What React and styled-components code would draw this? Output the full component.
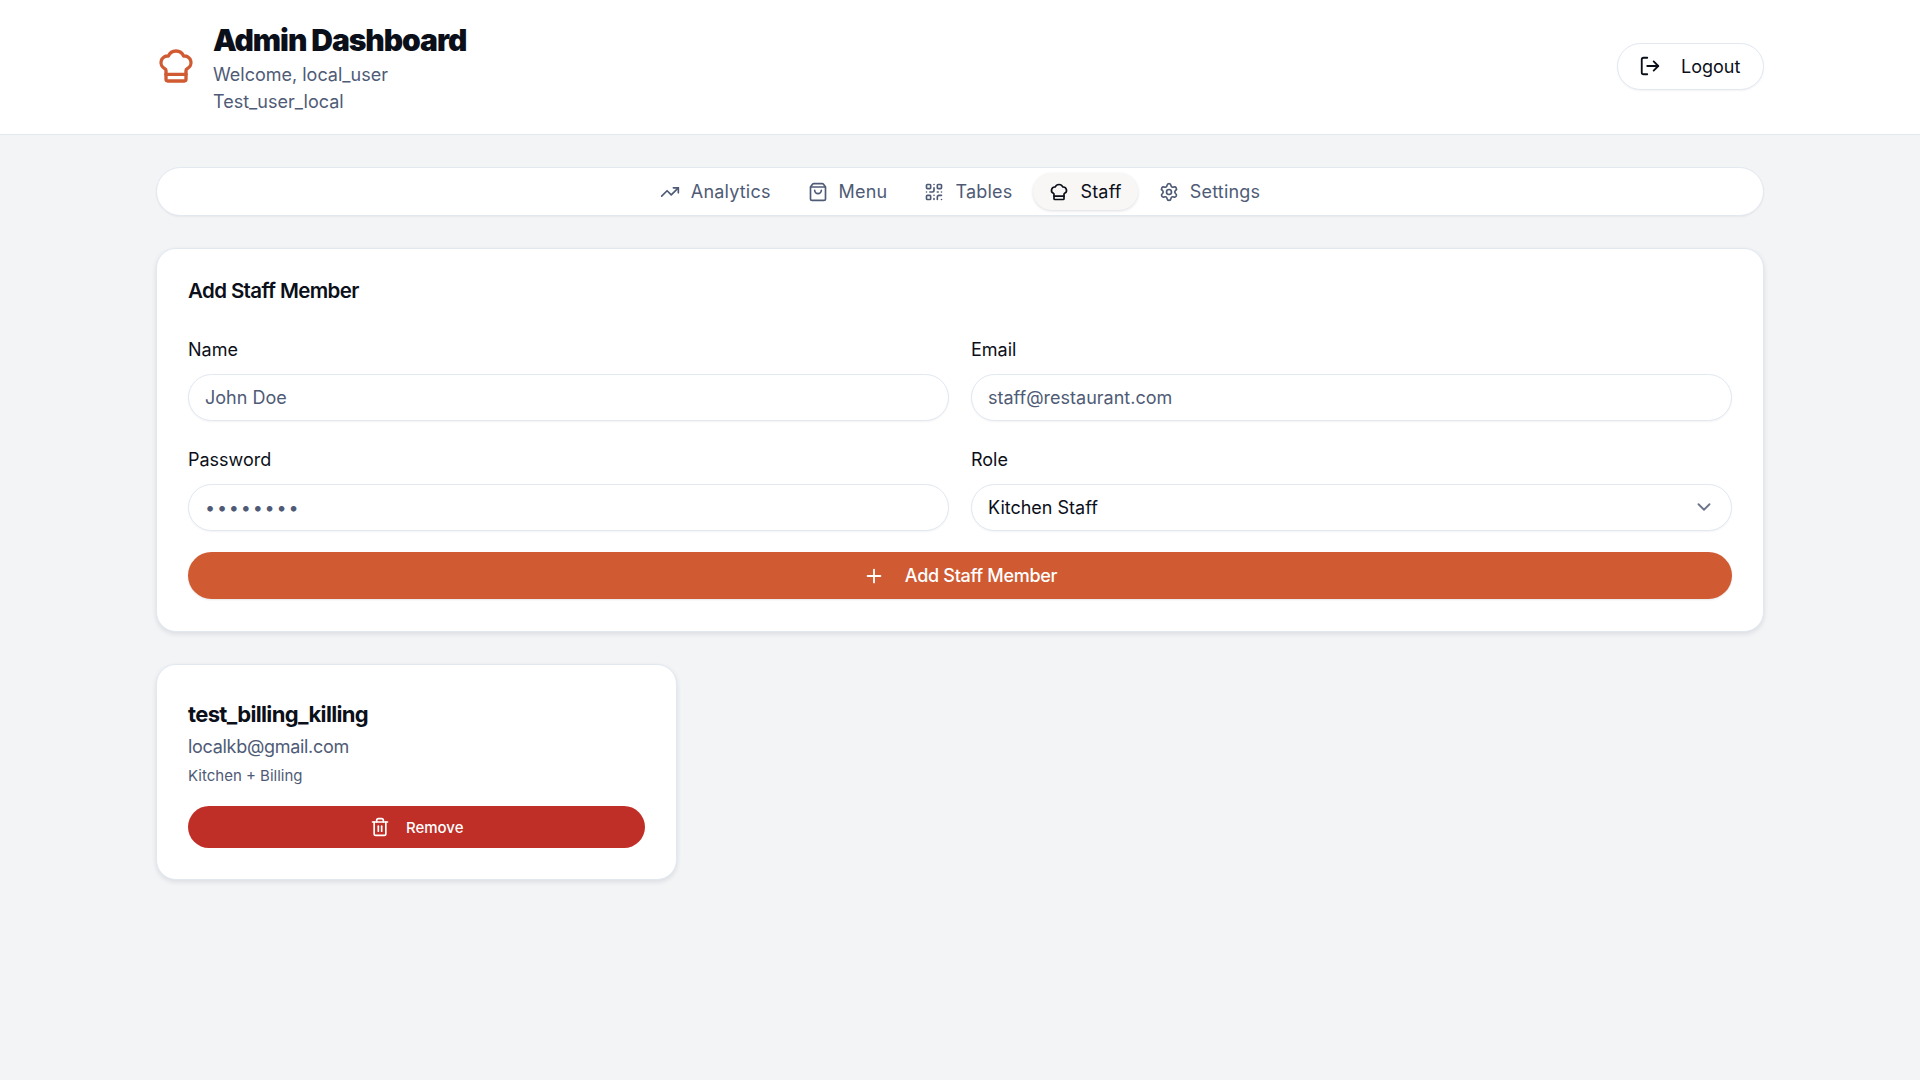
import React from "react";
import styled, { createGlobalStyle } from "styled-components";
import {
  ChefHat,
  ChevronDown,
  LogOut,
  Plus,
  QrCode,
  Settings,
  ShoppingBag,
  Trash2,
  TrendingUp,
} from "lucide-react";

const GlobalStyle = createGlobalStyle`
  * {
    box-sizing: border-box;
  }

  body {
    margin: 0;
    min-height: 1080px;
    background: #f3f4f6;
    color: #0b0f19;
    font-family: Inter, "Liberation Sans", sans-serif;
    font-size: 18px;
  }
`;

const Header = styled.header`
  display: flex;
  align-items: center;
  justify-content: space-between;
  height: 135px;
  padding: 0 156px;
  background: #ffffff;
  border-bottom: 1px solid #e2e8f0;
`;

const Brand = styled.div`
  display: flex;
  align-items: center;
  gap: 17px;
  padding-top: 3px;
  color: #d05a32;

  svg {
    margin-bottom: 5px;
  }
`;

const Title = styled.h1`
  margin: 0 0 3px;
  color: #0b0f19;
  font-size: 30px;
  font-weight: 900;
  line-height: 36px;
  letter-spacing: -0.035em;
`;

const Subtitle = styled.p`
  margin: 0;
  color: #4f5b76;
  font-size: 18px;
  line-height: 27px;
`;

const LogoutButton = styled.button`
  display: flex;
  align-items: center;
  gap: 20px;
  width: 147px;
  height: 47px;
  margin-bottom: 2px;
  padding: 0 21px;
  background: #ffffff;
  border: 1px solid #e2e8f0;
  border-radius: 999px;
  box-shadow: 0 1px 2px rgba(15, 23, 42, 0.05);
  color: #0b0f19;
  font: inherit;
`;

const Main = styled.main`
  display: flex;
  flex-direction: column;
  gap: 32px;
  padding: 32px 156px;
`;

const Tabs = styled.nav`
  display: flex;
  align-items: center;
  justify-content: center;
  gap: 5px;
  height: 49px;
  background: #ffffff;
  border: 1px solid #e2e8f0;
  border-radius: 999px;
  box-shadow: 0 1px 2px rgba(15, 23, 42, 0.05);
`;

const Tab = styled.button`
  display: flex;
  align-items: center;
  gap: 11px;
  height: 37px;
  padding: 0 16px;
  background: ${(props) => (props.$active ? "#f8f7f5" : "transparent")};
  border: 0;
  border-radius: 999px;
  box-shadow: ${(props) =>
    props.$active ? "0 1px 3px rgba(15, 23, 42, 0.14)" : "none"};
  color: ${(props) => (props.$active ? "#0b0f19" : "#4f5b76")};
  font: inherit;
  letter-spacing: 0.2px;
`;

const Card = styled.section`
  padding: 31px;
  background: #ffffff;
  border: 1px solid #e2e8f0;
  border-radius: 20px;
  box-shadow: 0 2px 5px rgba(15, 23, 42, 0.1);
`;

const CardTitle = styled.h2`
  margin: 0 0 32px;
  font-size: 20.5px;
  font-weight: 600;
  line-height: 22px;
  letter-spacing: -0.03em;
`;

const FormGrid = styled.div`
  display: grid;
  grid-template-columns: 1fr 1fr;
  gap: 23px 22px;
`;

const Field = styled.label`
  display: flex;
  flex-direction: column;
  gap: 8px;
  font-size: 18px;
  line-height: 32px;
`;

const Input = styled.input`
  width: 100%;
  height: 47px;
  padding: 0 16px;
  background: #ffffff;
  border: 1px solid #e2e8f0;
  border-radius: 999px;
  box-shadow: 0 1px 2px rgba(15, 23, 42, 0.05);
  color: #4f5b76;
  font: inherit;
  outline: none;

  &::placeholder {
    color: #4f5b76;
    opacity: 1;
  }
`;

const PasswordInput = styled(Input).attrs({ type: "password" })`
  letter-spacing: 1.8px;
`;

const SelectWrap = styled.div`
  position: relative;
  color: #6b7489;

  svg {
    position: absolute;
    top: 12px;
    right: 17px;
    pointer-events: none;
  }
`;

const Select = styled(Input).attrs({ as: "select" })`
  appearance: none;
  color: #0b0f19;
`;

const SubmitButton = styled.button`
  display: flex;
  align-items: center;
  justify-content: center;
  gap: 20px;
  width: 100%;
  height: 47px;
  margin: 21px 0 1px;
  background: #d05a32;
  border: 0;
  border-radius: 999px;
  box-shadow: 0 1px 2px rgba(15, 23, 42, 0.1);
  color: #ffffff;
  font: inherit;
  font-weight: 500;
  letter-spacing: -0.3px;
`;

const StaffGrid = styled.div`
  display: grid;
  grid-template-columns: repeat(3, 1fr);
  gap: 22px;
`;

const StaffName = styled.h3`
  margin: 0;
  font-size: 22px;
  font-weight: 700;
  line-height: 36px;
  letter-spacing: -0.03em;
`;

const StaffEmail = styled.p`
  margin: 0;
  color: #4f5b76;
  font-size: 18px;
  line-height: 30px;
  letter-spacing: -0.3px;
`;

const StaffRole = styled.p`
  margin: 0 0 16px;
  color: #4f5b76;
  font-size: 15px;
  line-height: 28px;
`;

const RemoveButton = styled.button`
  display: flex;
  align-items: center;
  justify-content: center;
  gap: 16px;
  width: 100%;
  height: 42px;
  background: #c02f27;
  border: 0;
  border-radius: 999px;
  color: #ffffff;
  font: inherit;
  font-size: 15px;
  font-weight: 500;
`;

const tabs = [
  { label: "Analytics", icon: TrendingUp },
  { label: "Menu", icon: ShoppingBag },
  { label: "Tables", icon: QrCode },
  { label: "Staff", icon: ChefHat, active: true },
  { label: "Settings", icon: Settings },
];

function App() {
  return (
    <>
      <GlobalStyle />
      <Header>
        <Brand>
          <ChefHat size={40} />
          <div>
            <Title>Admin Dashboard</Title>
            <Subtitle>Welcome, local_user</Subtitle>
            <Subtitle>Test_user_local</Subtitle>
          </div>
        </Brand>
        <LogoutButton>
          <LogOut size={22} />
          Logout
        </LogoutButton>
      </Header>

      <Main>
        <Tabs>
          {tabs.map(({ label, icon: Icon, active }) => (
            <Tab key={label} $active={active}>
              <Icon size={20} />
              {label}
            </Tab>
          ))}
        </Tabs>

        <Card>
          <CardTitle>Add Staff Member</CardTitle>
          <FormGrid>
            <Field>
              Name
              <Input placeholder="John Doe" />
            </Field>
            <Field>
              Email
              <Input placeholder="staff@restaurant.com" />
            </Field>
            <Field>
              Password
              <PasswordInput defaultValue="password" />
            </Field>
            <Field>
              Role
              <SelectWrap>
                <Select defaultValue="kitchen">
                  <option value="kitchen">Kitchen Staff</option>
                  <option value="billing">Billing Staff</option>
                </Select>
                <ChevronDown size={22} />
              </SelectWrap>
            </Field>
          </FormGrid>
          <SubmitButton>
            <Plus size={22} />
            Add Staff Member
          </SubmitButton>
        </Card>

        <StaffGrid>
          <Card>
            <StaffName>test_billing_killing</StaffName>
            <StaffEmail>localkb@gmail.com</StaffEmail>
            <StaffRole>Kitchen + Billing</StaffRole>
            <RemoveButton>
              <Trash2 size={20} />
              Remove
            </RemoveButton>
          </Card>
        </StaffGrid>
      </Main>
    </>
  );
}

export default App;
